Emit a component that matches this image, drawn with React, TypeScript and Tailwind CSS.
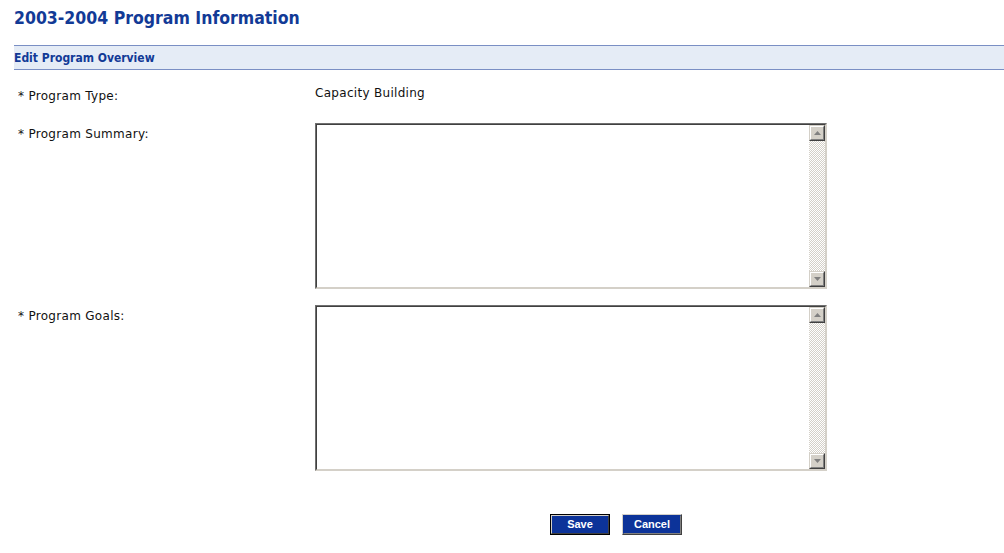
import React from "react";

const sans = "font-['DejaVu_Sans',Verdana,sans-serif]";
const cond = "font-['DejaVu_Sans_Condensed','DejaVu_Sans',sans-serif]";

function ScrollButton({ dir }: { dir: "up" | "down" }) {
    return (
        <div className="w-[16px] h-[16px] bg-[#d4d0c8] border border-t-[#d4d0c8] border-l-[#d4d0c8] border-b-[#404040] border-r-[#404040]">
            <div className="w-full h-full flex items-center justify-center border border-t-white border-l-white border-b-[#808080] border-r-[#808080]">
                <svg width="7" height="4" viewBox="0 0 7 4">
                    {dir === "up" ? (
                        <polygon points="3.5,0 7,4 0,4" fill="#808080" />
                    ) : (
                        <polygon points="0,0 7,0 3.5,4" fill="#808080" />
                    )}
                </svg>
            </div>
        </div>
    );
}

function TextBox() {
    return (
        <div className="w-[512px] h-[166px] border border-t-[#707070] border-l-[#707070] border-b-[#d4d0c8] border-r-[#d4d0c8]">
            <div className="w-full h-full flex border border-t-[#404040] border-l-[#404040] border-b-[#d4d0c8] border-r-[#d4d0c8] bg-white">
                <div className="flex-1" />
                <div className="w-[16px] flex flex-col bg-[image:repeating-conic-gradient(#d4d0c8_0%_25%,#ffffff_0%_50%)] bg-[length:2px_2px]">
                    <ScrollButton dir="up" />
                    <div className="flex-1" />
                    <ScrollButton dir="down" />
                </div>
            </div>
        </div>
    );
}

export default function App() {
    return (
        <div className={`w-[1004px] h-[553px] bg-white text-black ${sans}`}>
            <div className="pl-[14px] pt-[6px] h-[45px]">
                <h1 className={`${cond} font-bold text-[17.5px] leading-[24px] text-[#123a96]`}>
                    2003-2004 Program Information
                </h1>
            </div>

            <div className="ml-[14px] h-[25px] bg-[#e5ecf6] border-y border-[#7a8fc4] flex items-center">
                <span className={`${cond} font-bold text-[12px] text-[#123a96]`}>Edit Program Overview</span>
            </div>

            <div className="pl-[18px] pt-[18px] text-[12px] tracking-[0.3px] leading-[16px] text-[#111111]">
                <div className="flex">
                    <div className="w-[297px]">* Program Type:</div>
                    <div className="-mt-[3px]">Capacity Building</div>
                </div>

                <div className="flex mt-[19px]">
                    <div className="w-[297px] pt-[3px]">* Program Summary:</div>
                    <TextBox />
                </div>

                <div className="flex mt-[16px]">
                    <div className="w-[297px] pt-[3px]">* Program Goals:</div>
                    <TextBox />
                </div>
            </div>

            <div className="flex pl-[550px] pt-[43px] gap-[12px]">
                <button className="w-[60px] h-[21px] border border-black">
                    <div className="w-full h-full border border-t-[#d4d0c8] border-l-[#d4d0c8] border-b-[#404040] border-r-[#404040] bg-[#0c3399] flex items-center justify-center text-white font-bold text-[11px] font-['Liberation_Sans',Arial,sans-serif]">
                        Save
                    </div>
                </button>
                <button className="w-[60px] h-[21px] border border-t-[#d4d0c8] border-l-[#d4d0c8] border-b-[#404040] border-r-[#404040]">
                    <div className="w-full h-full border border-t-[#0c3399] border-l-[#0c3399] border-b-[#808080] border-r-[#808080] bg-[#0c3399] flex items-center justify-center text-white font-bold text-[11px] font-['Liberation_Sans',Arial,sans-serif]">
                        Cancel
                    </div>
                </button>
            </div>
        </div>
    );
}
